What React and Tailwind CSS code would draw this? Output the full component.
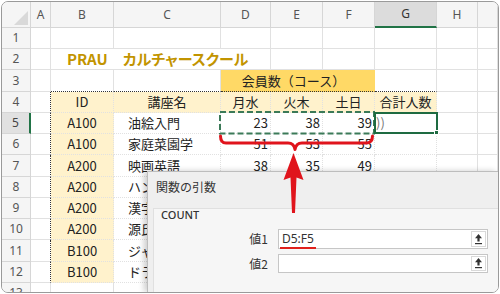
const data = [
  ["A100", "油絵入門", 23, 38, 39],
  ["A100", "家庭菜園学", 51, 53, 55],
  ["A200", "映画英語", 38, 35, 49],
  ["A200", "ハンドメイド", 42, 30, 28],
  ["A200", "漢字検定", 25, 31, 40],
  ["A200", "源氏物語", 18, 22, 36],
  ["B100", "ジャズダンス", 44, 47, 52],
  ["B100", "ドラム入門", 29, 33, 41],
];

const base =
  "flex items-center overflow-hidden whitespace-nowrap border-r border-b border-[#e1e1e1] text-[13px] text-[#222]";
const box = "border-dotted border-[#333]";
const hdr =
  "flex items-center justify-center border-r border-b border-[#d6d6d6] bg-[#f5f5f5] text-[12px] text-[#555] font-['Noto_Sans',sans-serif]";

function RowHead({ n, active }) {
  return (
    <div
      className={
        active
          ? "flex items-center justify-center border-b border-[#d6d6d6] border-r-2 border-r-[#217346] bg-[#e1e1e1] text-[12px] text-[#444] font-['Noto_Sans',sans-serif]"
          : hdr
      }
    >
      {n}
    </div>
  );
}

function UpBtn() {
  return (
    <div className="flex w-[15px] items-center justify-center self-stretch border border-[#d9d9d9] bg-white m-[1px]">
      <svg width="7" height="11" viewBox="0 0 7 11">
        <path d="M3.5 0 L7 4.2 H4.6 V7.5 H2.4 V4.2 H0 Z" fill="#333" />
        <rect x="0" y="9" width="7" height="1.2" fill="#333" />
      </svg>
    </div>
  );
}

export default function App() {
  return (
    <div className="w-[500px] h-[294px] bg-white pl-px pt-px font-['Noto_Sans_CJK_JP','Noto_Sans',sans-serif]">
      <div className="relative w-[498px] h-[292px] overflow-hidden rounded-[7px] border border-[#9a9a9a] bg-white">
        {/* sheet grid */}
        <div className="grid grid-cols-[29px_20px_63px_107px_50px_52px_52px_62px_41px_1fr] grid-rows-[26px_21px_21px_22px_21px_21px_21px_22px_21px_21px_21px_22px_21px_21px]">
          {/* column headers */}
          <div className="relative border-r border-b border-[#d6d6d6] bg-[#f5f5f5]">
            <svg className="absolute right-[2px] bottom-[2px]" width="14" height="14" viewBox="0 0 14 14">
              <path d="M14 0 V14 H0 Z" fill="#d9d9d9" />
            </svg>
          </div>
          <div className={hdr}>A</div>
          <div className={hdr}>B</div>
          <div className={hdr}>C</div>
          <div className={hdr}>D</div>
          <div className={hdr}>E</div>
          <div className={hdr}>F</div>
          <div className="flex items-center justify-center border-r border-[#d6d6d6] border-b-2 border-b-[#217346] bg-[#dcdcdc] text-[12px] text-[#333] font-['Noto_Sans',sans-serif]">
            G
          </div>
          <div className={hdr}>H</div>
          <div className={hdr}></div>

          {/* row 1 */}
          <RowHead n={1} />
          <div className={base}></div>
          <div className={base}></div>
          <div className={base}></div>
          <div className={base}></div>
          <div className={base}></div>
          <div className={base}></div>
          <div className={base}></div>
          <div className={base}></div>
          <div className={base}></div>

          {/* row 2 */}
          <RowHead n={2} />
          <div className={base}></div>
          <div className={`${base} col-span-3 pl-[16px] overflow-visible text-[15px] font-bold text-[#c29400] [font-feature-settings:'palt']`}>
            PRAU　カルチャースクール
          </div>
          <div className={base}></div>
          <div className={base}></div>
          <div className={base}></div>
          <div className={base}></div>
          <div className={base}></div>

          {/* row 3 */}
          <RowHead n={3} />
          <div className={base}></div>
          <div className={`${base} [border-bottom-style:dotted] border-b-[#333]`}></div>
          <div className={`${base} [border-bottom-style:dotted] border-b-[#333]`}></div>
          <div className={`${base} col-span-3 justify-center pr-[8px] bg-[#ffd966] border-r-[#ffd966] [border-bottom-style:dotted] border-b-[#333]`}>
            会員数（コース）
          </div>
          <div className={`${base} [border-bottom-style:dotted] border-b-[#333]`}></div>
          <div className={base}></div>
          <div className={base}></div>

          {/* row 4 */}
          <RowHead n={4} />
          <div className={`${base} [border-right-style:dotted] border-r-[#333]`}></div>
          <div className={`${base} ${box} justify-center bg-[#fff2cc]`}>ID</div>
          <div className={`${base} ${box} justify-center bg-[#fff2cc]`}>講座名</div>
          <div className={`${base} ${box} justify-center bg-[#fff2cc]`}>月水</div>
          <div className={`${base} ${box} justify-center bg-[#fff2cc]`}>火木</div>
          <div className={`${base} ${box} justify-center bg-[#fff2cc]`}>土日</div>
          <div className={`${base} ${box} justify-center bg-[#fff2cc]`}>合計人数</div>
          <div className={base}></div>
          <div className={base}></div>

          {/* rows 5-12 */}
          {data.map((r, i) => [
            <RowHead key={`h${i}`} n={i + 5} active={i === 0} />,
            <div key={`a${i}`} className={`${base} [border-right-style:dotted] border-r-[#333]`}></div>,
            <div key={`b${i}`} className={`${base} ${box} justify-center bg-[#fff2cc]`}>{r[0]}</div>,
            <div key={`c${i}`} className={`${base} ${box} pl-[14px]`}>{r[1]}</div>,
            <div key={`d${i}`} className={`${base} ${box} justify-end pr-[2px]`}>{r[2]}</div>,
            <div key={`e${i}`} className={`${base} ${box} justify-end pr-[2px]`}>{r[3]}</div>,
            <div key={`f${i}`} className={`${base} ${box} justify-end pr-[2px]`}>{r[4]}</div>,
            <div key={`g${i}`} className={`${base} ${box} pl-[1px] text-[#777] overflow-visible`}>{i === 0 ? "))" : ""}</div>,
            <div key={`x${i}`} className={base}></div>,
            <div key={`y${i}`} className={base}></div>,
          ])}

          {/* row 13 */}
          <RowHead n={13} />
          <div className={base}></div>
          <div className={base}></div>
          <div className={base}></div>
          <div className={base}></div>
          <div className={base}></div>
          <div className={base}></div>
          <div className={base}></div>
          <div className={base}></div>
          <div className={base}></div>
        </div>

        {/* copy range marching ants D5:F5 */}
        <svg className="absolute left-[217px] top-[109px]" width="157" height="24" viewBox="0 0 157 24">
          <rect x="1" y="1" width="154" height="21.5" fill="none" stroke="#3b7a58" strokeWidth="2" strokeDasharray="6 3" />
        </svg>

        {/* active cell G5 */}
        <div className="absolute left-[372px] top-[110px] w-[64px] h-[22px] border-2 border-[#1e6b41]"></div>
        <div className="absolute left-[432px] top-[128px] w-[5px] h-[5px] bg-[#1e6b41] border border-white"></div>

        {/* function arguments dialog */}
        <div className="absolute left-[145px] top-[169px] right-0 bottom-0 flex flex-col border-l border-t border-[#bdbdbd] bg-[#efefef] shadow-[-3px_0_6px_rgba(0,0,0,0.2)]">
          <div className="h-[36px] pl-[8px] pt-[7px] text-[12px] leading-[16px] text-[#333]">関数の引数</div>
          <div className="ml-[5px] flex-1 border-l border-t border-[#e0e0e0] bg-[#f6f6f6] pl-[7px]">
            <div className="h-[12px] text-[11px] leading-[12px] font-medium text-[#333] font-['Noto_Sans',sans-serif]">COUNT</div>
            <div className="mt-[8px] flex items-center">
              <div className="w-[107px] mr-[10px] text-right text-[12px] text-[#333]">値1</div>
              <div className="relative flex h-[20px] w-[210px] items-center justify-between border border-[#c6c6c6] bg-white">
                <span className="pl-[3px] text-[12px] text-[#333] font-['Noto_Sans',sans-serif]">D5:F5</span>
                <UpBtn />
                <div className="absolute left-[1px] bottom-[-1px] w-[36px] h-[2px] bg-[#e0201c]"></div>
              </div>
            </div>
            <div className="mt-[5px] flex items-center">
              <div className="w-[107px] mr-[10px] text-right text-[12px] text-[#333]">値2</div>
              <div className="flex h-[19px] w-[210px] items-center justify-end border border-[#c6c6c6] bg-white">
                <UpBtn />
              </div>
            </div>
          </div>
        </div>

        {/* red annotation: brace + arrow */}
        <svg className="absolute left-0 top-0" width="496" height="290" viewBox="2 2 496 290">
          <path
            d="M220.5 136 Q220.5 143 226 143 L288 143 Q294 143 295 149.5 Q296 143 302 143 L366 143 Q372.5 143 372.5 136"
            fill="none"
            stroke="#e0141c"
            strokeWidth="3"
            strokeLinecap="round"
            strokeLinejoin="round"
          />
          <path d="M293.5 153 L303.5 180 L296.5 177.5 L295 213 L292 213 L290.5 177.5 L283.5 180 Z" fill="#e0141c" />
        </svg>
      </div>
    </div>
  );
}
